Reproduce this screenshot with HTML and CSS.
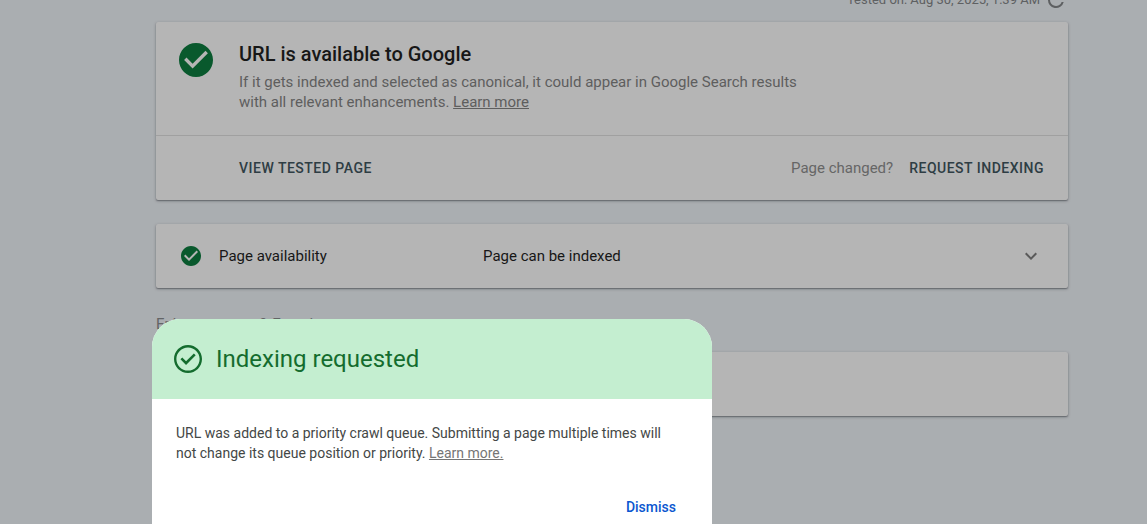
FILE: index.html
```html
<!DOCTYPE html>
<html lang="en">
<head>
<meta charset="utf-8">
<title>URL inspection</title>
<link rel="stylesheet" href="styles.css">
</head>
<body>
<main class="page">
  <div class="tested">
    <span>Tested on: Aug 30, 2025, 1:39 AM</span>
    <svg class="tested-icon" viewBox="2 2 20 20" aria-hidden="true"><path fill="currentColor" d="M17.65 6.35A7.96 7.96 0 0 0 12 4a8 8 0 1 0 7.73 10h-2.08A6 6 0 1 1 12 6c1.66 0 3.14.69 4.22 1.78L13 11h7V4z"/></svg>
  </div>

  <section class="card">
    <div class="verdict">
      <svg class="verdict-icon" viewBox="2 2 20 20" aria-hidden="true"><path fill="currentColor" d="M12 2C6.48 2 2 6.48 2 12s4.48 10 10 10 10-4.48 10-10S17.52 2 12 2zm-2 15-5-5 1.410-1.410L10 14.170l7.590-7.590L19 8z"/></svg>
      <div class="verdict-text">
        <h1 class="verdict-title">URL is available to Google</h1>
        <p class="verdict-note">If it gets indexed and selected as canonical, it could appear in Google Search results<br>with all relevant enhancements. <a class="link" href="#">Learn more</a></p>
      </div>
    </div>
    <div class="actions">
      <button class="action" type="button">VIEW TESTED PAGE</button>
      <div class="actions-end">
        <span class="hint">Page changed?</span>
        <button class="action" type="button">REQUEST INDEXING</button>
      </div>
    </div>
  </section>

  <button class="card row" type="button">
    <svg class="row-icon" viewBox="2 2 20 20" aria-hidden="true"><path fill="currentColor" d="M12 2C6.48 2 2 6.48 2 12s4.48 10 10 10 10-4.48 10-10S17.52 2 12 2zm-2 15-5-5 1.410-1.410L10 14.170l7.590-7.590L19 8z"/></svg>
    <span class="row-name">Page availability</span>
    <span class="row-state">Page can be indexed</span>
    <svg class="chevron" viewBox="0 0 24 24" aria-hidden="true"><path fill="currentColor" d="M7.410 8.590 12 13.170l4.590-4.580L18 10l-6 6-6-6z"/></svg>
  </button>

  <h2 class="group-title">Enhancements &amp; Experience</h2>
  <section class="card empty"></section>
</main>

<div class="dialog" role="dialog" aria-labelledby="dialog-title">
  <header class="dialog-head">
    <svg class="dialog-icon" viewBox="2 2 20 20" aria-hidden="true"><path fill="currentColor" d="M16.200 8 10.600 13.600 7.900 10.900 6.600 12.200l4 4 6.900-6.900zM12 2C6.480 2 2 6.480 2 12s4.480 10 10 10 10-4.480 10-10S17.520 2 12 2zm0 18.300c-4.580 0-8.300-3.720-8.300-8.300S7.420 3.700 12 3.700s8.300 3.720 8.300 8.300-3.720 8.300-8.300 8.300z"/></svg>
    <h2 class="dialog-title" id="dialog-title">Indexing requested</h2>
  </header>
  <p class="dialog-text">URL was added to a priority crawl queue. Submitting a page multiple times will<br>not change its queue position or priority. <a class="link dialog-link" href="#">Learn more.</a></p>
  <footer class="dialog-foot">
    <button class="dismiss" type="button">Dismiss</button>
  </footer>
</div>
</body>
</html>
```
FILE: styles.css
```css
* { box-sizing: border-box; }
body {
  margin: 0;
  min-height: 100vh;
  position: relative;
  background: #aaaeb1;
  color: #171717;
  font-family: Roboto, "Liberation Sans", sans-serif;
  font-size: 15px;
  line-height: 20px;
}
h1, h2, p { margin: 0; }
button {
  border: 0;
  padding: 0;
  background: none;
  font: inherit;
  color: inherit;
  cursor: pointer;
}
.page { padding: 0 79px 0 156px; }
.tested {
  display: flex;
  align-items: flex-end;
  justify-content: flex-end;
  gap: 6px;
  height: 10px;
  margin-bottom: 12px;
  padding-right: 2px;
  color: #5e6062;
  font-size: 13px;
}
.tested-icon { width: 20px; height: 20px; flex: none; }
.card {
  display: block;
  width: 100%;
  margin-bottom: 24px;
  background: #b5b5b5;
  border-radius: 2px;
  box-shadow: 0 1px 3px rgba(40, 42, 50, 0.4), 0 1px 1px rgba(40, 42, 50, 0.3);
}
.verdict {
  display: flex;
  gap: 26px;
  padding: 20px 23px 23px;
}
.verdict-icon { width: 34px; height: 34px; margin-top: 1px; color: #09592d; flex: none; }
.verdict-title { font-size: 20px; line-height: 24px; font-weight: 500; margin-bottom: 6px; }
.verdict-note { color: #5e5e5e; }
.link { color: inherit; text-decoration: underline; }
.actions {
  display: flex;
  align-items: center;
  justify-content: space-between;
  height: 65px;
  padding: 0 24px 0 83px;
  border-top: 1px solid #a0a0a0;
}
.actions-end { display: flex; align-items: center; gap: 16px; }
.action { color: #2e3d44; font-size: 14px; font-weight: 500; letter-spacing: 0.5px; }
.hint { color: #666; }
.row {
  display: grid;
  grid-template-columns: 20px 246px 1fr 24px;
  align-items: center;
  column-gap: 18px;
  height: 64px;
  padding: 0 25px;
  text-align: left;
}
.row-icon { width: 20px; height: 20px; color: #09592d; }
.chevron { width: 24px; height: 24px; color: #5a5a5a; }
.group-title {
  margin: 26px 0 18px;
  color: #626466;
  font-size: 15px;
  font-weight: 400;
}
.empty { height: 64px; }
.dialog {
  position: absolute;
  top: 319px;
  left: 152px;
  width: 560px;
  overflow: hidden;
  border-radius: 28px 28px 0 0;
  background: #fff;
}
.dialog-head {
  display: flex;
  align-items: center;
  gap: 14px;
  height: 80px;
  padding: 0 22px;
  background: #c4eed0;
  color: #146c2e;
}
.dialog-icon { width: 28px; height: 28px; flex: none; }
.dialog-title { font-size: 24px; line-height: 32px; font-weight: 400; }
.dialog-text { padding: 24px; color: #444746; font-size: 14px; }
.dialog-link { color: #757575; }
.dialog-foot { display: flex; justify-content: flex-end; padding: 10px 36px 7px; }
.dismiss { color: #0b57d0; font-size: 14px; font-weight: 500; }
```
